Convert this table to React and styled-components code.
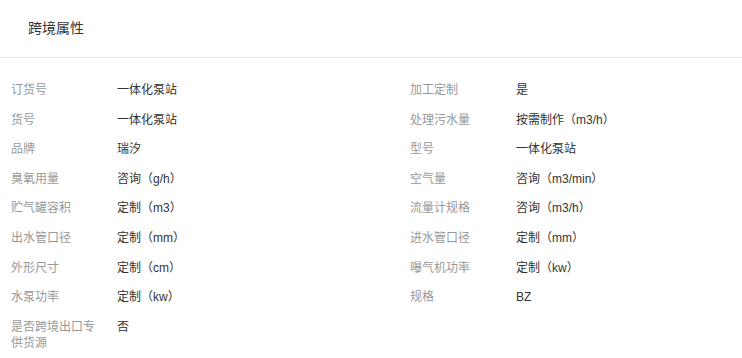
import React from "react";
import styled, { createGlobalStyle } from "styled-components";

const Global = createGlobalStyle`
  html, body { margin: 0; padding: 0; background: #fff; }
  body { font-family: "Liberation Sans", "Noto Sans CJK SC", sans-serif; }
`;

const Panel = styled.div`
  width: 742px;
  background: #fff;
`;

const Header = styled.div`
  box-sizing: border-box;
  height: 58px;
  display: flex;
  align-items: center;
  padding: 0 0 4px 28px;
  border-bottom: 1px solid #e8e8e8;
  font-size: 14px;
  color: #333;
`;

const Grid = styled.div`
  display: grid;
  grid-template-columns: 399px 1fr;
  row-gap: 13.6px;
  padding: 24px 0 0 11px;
`;

const Item = styled.div`
  display: flex;
  align-items: flex-start;
  font-size: 12px;
  line-height: 16px;
`;

const Label = styled.div`
  width: 90px;
  margin-right: 16px;
  flex-shrink: 0;
  color: #999;
`;

const Value = styled.div`
  color: #333;
`;

const rows = [
  ["订货号", "一体化泵站"],
  ["加工定制", "是"],
  ["货号", "一体化泵站"],
  ["处理污水量", "按需制作（m3/h）"],
  ["品牌", "瑞汐"],
  ["型号", "一体化泵站"],
  ["臭氧用量", "咨询（g/h）"],
  ["空气量", "咨询（m3/min）"],
  ["贮气罐容积", "定制（m3）"],
  ["流量计规格", "咨询（m3/h）"],
  ["出水管口径", "定制（mm）"],
  ["进水管口径", "定制（mm）"],
  ["外形尺寸", "定制（cm）"],
  ["曝气机功率", "定制（kw）"],
  ["水泵功率", "定制（kw）"],
  ["规格", "BZ"],
  ["是否跨境出口专供货源", "否"],
];

export default function App() {
  return (
    <Panel>
      <Global />
      <Header>跨境属性</Header>
      <Grid>
        {rows.map(([l, v]) => (
          <Item key={l}>
            <Label>{l}</Label>
            <Value>{v}</Value>
          </Item>
        ))}
      </Grid>
    </Panel>
  );
}
